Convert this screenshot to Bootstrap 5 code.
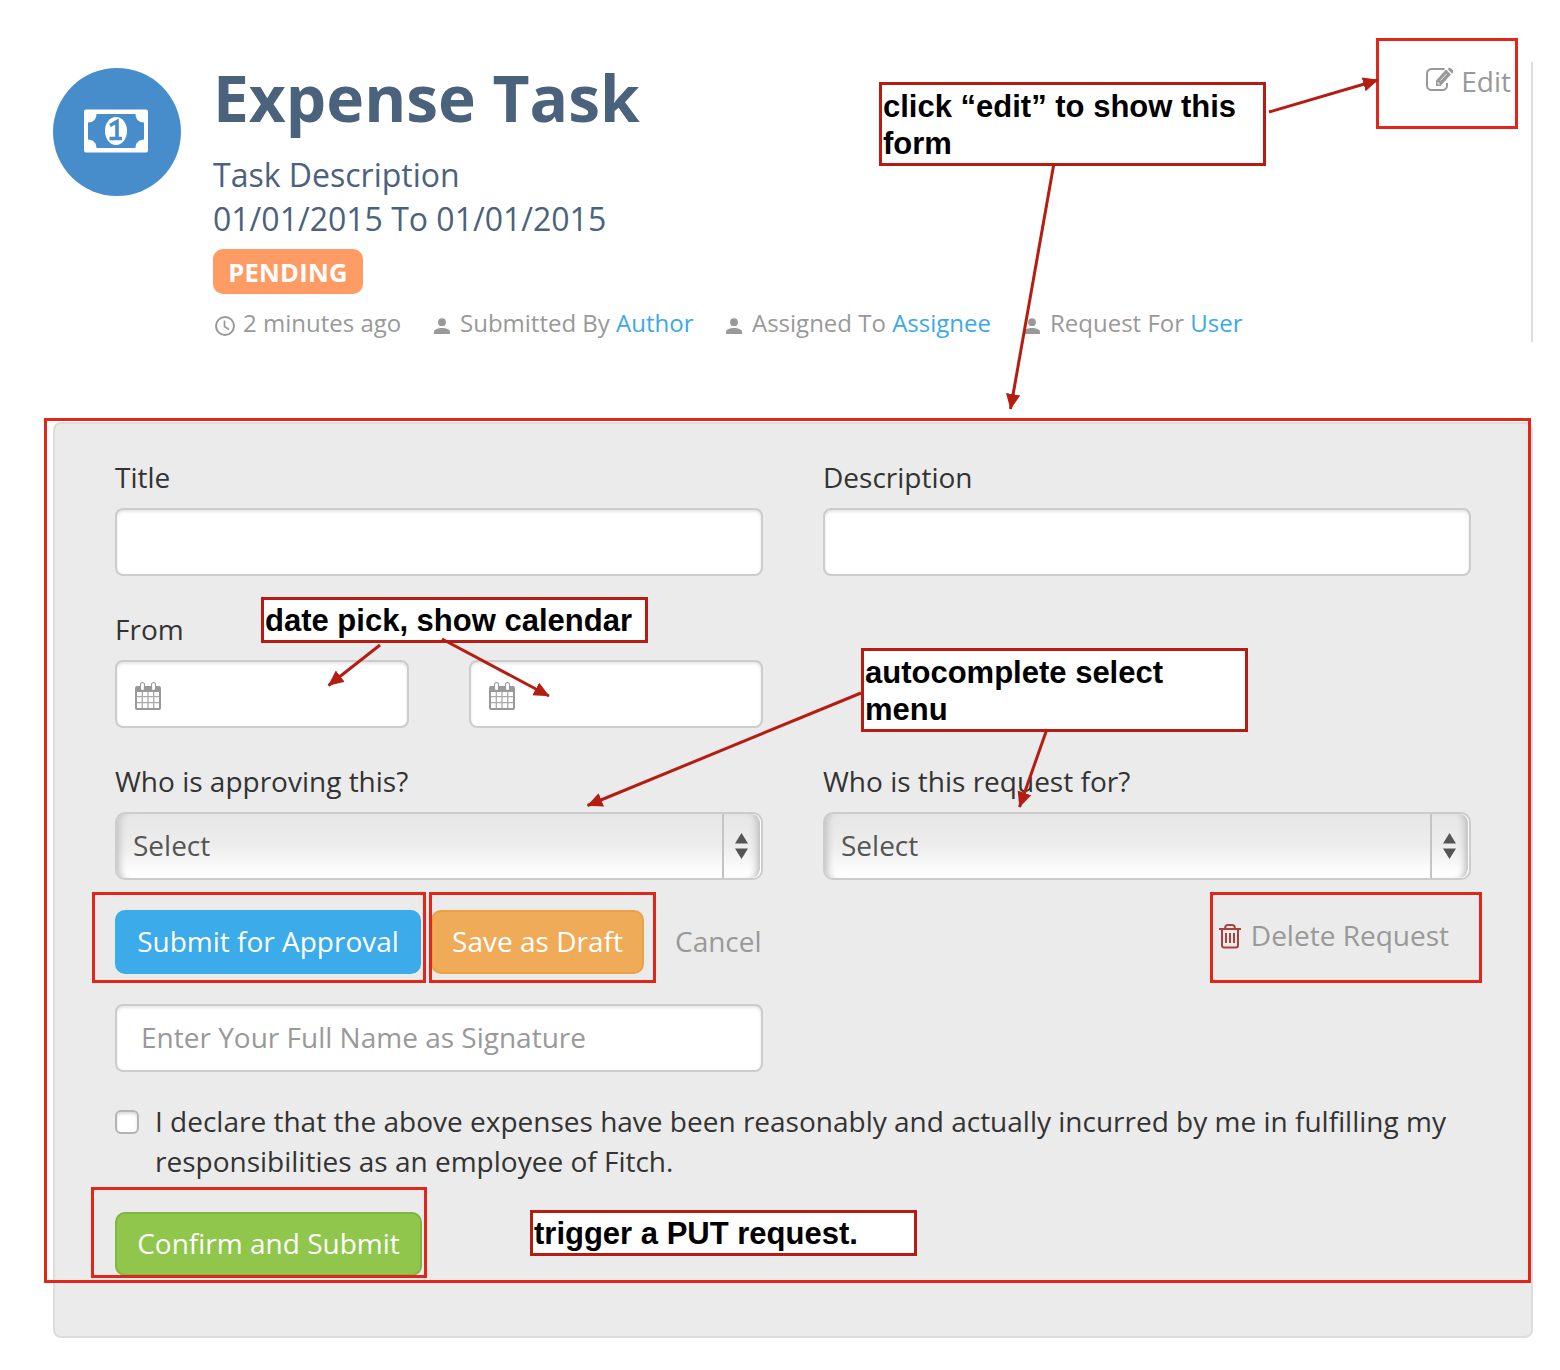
<!DOCTYPE html>
<html lang="en">
<head>
<meta charset="utf-8">
<title>Expense Task</title>
<link href="https://cdn.jsdelivr.net/npm/bootstrap@5.3.0/dist/css/bootstrap.min.css" rel="stylesheet">
<style>
body{font-family:"Open Sans","Noto Sans",sans-serif;font-size:28px;line-height:40px;color:#333;background:#fff}
.sheet{width:1560px;height:1370px;padding:62px 27px 0 53px;overflow:hidden}
.task-head{height:280px;border-right:2px solid #ddd}
.avatar{width:128px;height:128px;margin:6px 32px 0 0;padding:0 2px 2px 0;background:#488dcb}
.task-title{font-size:64px;line-height:70px;margin:1px 0 20px;color:#4b627d}
.task-text{font-size:32px;line-height:44px;color:#4b627d}
.status{width:150px;height:45px;margin-top:8px;border-radius:10px;background:#ff9b64;font-size:25.6px;letter-spacing:.25px;padding-top:2px}
.meta{font-size:24px;line-height:34px;margin-top:12px;color:#999}
.meta a,.meta .who{white-space:nowrap}
.meta a{color:#3ba9e8}
.meta svg{margin-right:8px}
.meta .clock{vertical-align:-4px}
.m1{width:219px}.m2{width:292px}.m3{width:298px}
.edit-link{color:#999;margin:-1px 20px 0 auto}
.panel{margin-top:80px;height:916px;border:2px solid #ddd;border-radius:8px;background:#ebebeb;padding:34px 60px 60px}
.cols{display:grid;grid-template-columns:1fr 1fr;column-gap:60px}
.field{margin-bottom:34px}
.field label{display:block;line-height:38px;margin-bottom:12px}
.form-control.box{height:68px;border:2px solid #ccc;border-radius:8px;font-size:28px;padding:0 24px 2px;box-shadow:inset 0 2px 3px rgba(0,0,0,.1)}
.form-control.box::placeholder{color:#999;opacity:1}
.form-control.date{padding:3px 18px 0}
.picker{height:68px;border:2px solid #ccc;border-radius:10px;background:linear-gradient(#e6e6e6,#ededed 50%,#fff 94%);padding-left:16px;color:#555;box-shadow:inset 9px 0 7px -6px #c4c4c4}
.picker .chosen{padding-bottom:2px}
.picker .knob{width:39px;padding-right:2px;border-left:2px solid #c4c4c4;border-right:1px solid #fff;border-radius:0 9px 9px 0;box-shadow:inset -8px 0 7px -5px #bbb}
.actions{margin-top:-4px;height:64px}
.btn.act{height:64px;border-width:2px;border-radius:10px;font-size:28px;line-height:40px;padding:0 0 2px;color:#fff}
.b-submit{width:306px;background:#3babe9;border-color:#3babe9;margin-right:10px}
.b-draft{width:213px;background:#efab57;border-color:#eda146;margin-right:31px}
.b-confirm{width:307px;background:#8fc64b;border-color:#7fb541}
.quiet{color:#999;padding-bottom:2px}
.delete{padding:0 22px 14px 0}
.bin{margin:2px 9px 0 0}
.sign{margin-top:30px}
.declare{margin:29px 0 31px}
.tick{width:24px;height:24px;flex:none;margin:9px 16px 0 0;border:2px solid #b4b4b4;border-radius:6px;background:#fff;box-shadow:inset 0 2px 3px rgba(0,0,0,.15)}
.frame{border:3px solid #e3261a}
.note{width:387px;border:3px solid #b51d12;background:#fff;color:#000;font:bold 31px/37px "Liberation Sans",Arial,sans-serif;padding:3px 1px 0}
.n1{left:879px;top:82px;height:84px}
.n2{left:261px;top:597px;height:46px;padding-top:2px}
.n3{left:861px;top:648px;height:84px}
.n4{left:530px;top:1210px;height:46px;padding-top:2px}
.f1{left:1376px;top:38px;width:142px;height:91px}
.f2{left:44px;top:418px;width:1487px;height:865px}
.f3{left:92px;top:892px;width:334px;height:91px}
.f4{left:429px;top:892px;width:227px;height:91px}
.f5{left:1210px;top:892px;width:272px;height:91px}
.f6{left:91px;top:1187px;width:336px;height:91px}
.arrows{left:0;top:0}
</style>
<script src="https://cdn.jsdelivr.net/npm/bootstrap@5.3.0/dist/js/bootstrap.bundle.min.js"></script>
</head>
<body>
<svg width="0" height="0" class="position-absolute">
<symbol id="person" viewBox="0 0 18 16"><circle cx="9" cy="4.2" r="3.900"/><path d="M1 16v-2c0-3 4.500-4 8-4s8 1 8 4v2z"/></symbol>
<symbol id="calendar" viewBox="0 0 26 28"><path fill="#999" d="M2 4h3V2.500a2.500 2.500 0 0 1 5 0V4h6V2.500a2.500 2.500 0 0 1 5 0V4h3a2 2 0 0 1 2 2v20a2 2 0 0 1-2 2H2a2 2 0 0 1-2-2V6a2 2 0 0 1 2-2z"/><path fill="#fff" d="M6 2.500a1.500 1.500 0 0 1 3 0v4a1.500 1.500 0 0 1-3 0zM17 2.500a1.500 1.500 0 0 1 3 0v4a1.500 1.500 0 0 1-3 0zM2 10h22v16H2z"/><path stroke="#aaa" stroke-width="1.300" d="M2 14.700h22M2 20.700h22M7.300 10v16M13 10v16M18.700 10v16"/></symbol>
</svg>
<main class="sheet position-relative">
  <header class="task-head d-flex">
    <div class="avatar rounded-circle d-flex align-items-center justify-content-center flex-shrink-0">
      <svg width="66" height="44" viewBox="0 0 66 44"><path fill="#fff" fill-rule="evenodd" d="M3 .5h60a2 2 0 0 1 2 2v39a2 2 0 0 1-2 2H3a2 2 0 0 1-2-2v-39a2 2 0 0 1 2-2zM13.500 5c0 5-3.500 8.500-8.500 8.500v17c5 0 8.500 3.500 8.500 8.500h39c0-5 3.500-8.500 8.500-8.500v-17c-5 0-8.500-3.500-8.500-8.500z"/><ellipse cx="33" cy="22" rx="11" ry="14" fill="#fff"/><path d="M27 16.500l7-4v17M26.500 29.500H39" fill="none" stroke="#488dcb" stroke-width="3.600"/></svg>
    </div>
    <div>
      <h1 class="task-title fw-bold">Expense Task</h1>
      <div class="task-text">Task Description</div>
      <div class="task-text">01/01/2015 To 01/01/2015</div>
      <div class="status d-flex align-items-center justify-content-center fw-bold text-white">PENDING</div>
      <div class="meta d-flex">
        <div class="m1 who"><svg class="clock" width="22" height="22" viewBox="0 0 22 22" fill="none" stroke="#999" stroke-width="2"><circle cx="12" cy="12" r="9"/><path stroke-width="1.700" d="M11.500 6.500v6l4.500 3"/></svg>2 minutes ago</div>
        <div class="m2 who"><svg width="20" height="16" fill="#999"><use href="#person" width="18" height="16" x="1"/></svg>Submitted By <a class="text-decoration-none" href="#">Author</a></div>
        <div class="m3 who"><svg width="20" height="16" fill="#999"><use href="#person" width="18" height="16" x="1"/></svg>Assigned To <a class="text-decoration-none" href="#">Assignee</a></div>
        <div class="who"><svg width="20" height="16" fill="#999"><use href="#person" width="18" height="16" x="1"/></svg>Request For <a class="text-decoration-none" href="#">User</a></div>
      </div>
    </div>
    <a class="edit-link d-flex align-items-start text-decoration-none flex-shrink-0" href="#"><svg class="me-2 mt-1" width="28" height="28" viewBox="-1 -2 28 28"><path fill="none" stroke="#999" stroke-width="2" d="M18.500 2H5.500A4.500 4.500 0 0 0 1 6.500v12A4.500 4.500 0 0 0 5.500 23h11a4.500 4.500 0 0 0 4.500-4.500V16"/><path fill="#999" d="M10 19v-5.500L20 2.500l5 5L14.500 19zM21.500 2l1-.8a2 2 0 0 1 2.600.2l1.700 1.700a2 2 0 0 1 .2 2.600l-.8 1z"/><path stroke="#fff" stroke-width=".8" fill="none" d="M14.500 13.500l6-6.500M12 15v2h2"/></svg>Edit</a>
  </header>

  <form class="panel">
    <div class="cols">
      <div class="field"><label for="title">Title</label><input id="title" class="form-control box"></div>
      <div class="field"><label for="desc">Description</label><input id="desc" class="form-control box"></div>
    </div>
    <div class="cols">
      <div class="field">
        <label>From</label>
        <div class="cols">
          <div class="form-control box date d-flex align-items-center"><svg width="26" height="28"><use href="#calendar"/></svg></div>
          <div class="form-control box date d-flex align-items-center"><svg width="26" height="28"><use href="#calendar"/></svg></div>
        </div>
      </div>
    </div>
    <div class="cols">
      <div class="field"><label>Who is approving this?</label>
        <div class="picker d-flex"><span class="chosen align-self-center me-auto">Select</span><span class="knob d-flex align-items-center justify-content-center"><svg width="13" height="26"><path fill="#555" d="M0 10.500L6.500 0 13 10.500zM0 15.500h13L6.500 26z"/></svg></span></div></div>
      <div class="field"><label>Who is this request for?</label>
        <div class="picker d-flex"><span class="chosen align-self-center me-auto">Select</span><span class="knob d-flex align-items-center justify-content-center"><svg width="13" height="26"><path fill="#555" d="M0 10.500L6.500 0 13 10.500zM0 15.500h13L6.500 26z"/></svg></span></div></div>
    </div>
    <div class="actions d-flex align-items-center">
      <button type="button" class="btn act b-submit">Submit for Approval</button>
      <button type="button" class="btn act b-draft">Save as Draft</button>
      <span class="quiet">Cancel</span>
      <span class="quiet delete d-flex align-items-center ms-auto"><svg class="bin" width="24" height="26" viewBox="0 0 24 26" fill="none" stroke="#ab403d" stroke-width="2"><path d="M1 6h22M4 6v16.500a2 2 0 0 0 2 2h12a2 2 0 0 0 2-2V6M7 6c0-3 1-4 3-4h4c2 0 3 1 3 4M8 10v10M12 10v10M16 10v10"/></svg>Delete Request</span>
    </div>
    <div class="cols sign"><input class="form-control box" placeholder="Enter Your Full Name as Signature"></div>
    <div class="declare d-flex"><span class="tick"></span><div>I declare that the above expenses have been reasonably and actually incurred by me in fulfilling my responsibilities as an employee of Fitch.</div></div>
    <button type="button" class="btn act b-confirm d-block">Confirm and Submit</button>
  </form>

  <div class="frame f1 position-absolute"></div>
  <div class="frame f2 position-absolute"></div>
  <div class="frame f3 position-absolute"></div>
  <div class="frame f4 position-absolute"></div>
  <div class="frame f5 position-absolute"></div>
  <div class="frame f6 position-absolute"></div>
  <div class="note n1 position-absolute">click “edit” to show this form</div>
  <div class="note n2 position-absolute">date pick, show calendar</div>
  <div class="note n3 position-absolute">autocomplete select menu</div>
  <div class="note n4 position-absolute">trigger a PUT request.</div>
  <svg class="arrows position-absolute pe-none" width="1560" height="1370">
    <defs><marker id="tip" markerUnits="userSpaceOnUse" markerWidth="16" markerHeight="16" refX="15" refY="7.500" orient="auto"><path fill="#b51d12" d="M0 .3l15.500 7.200L0 14.700z"/></marker></defs>
    <g stroke="#b51d12" stroke-width="3">
      <path marker-end="url(#tip)" d="M1269 112L1378 80"/>
      <path marker-end="url(#tip)" d="M1054 163L1010.500 409"/>
      <path marker-end="url(#tip)" d="M380 645L328.500 685.500"/>
      <path marker-end="url(#tip)" d="M442 639L549 696"/>
      <path marker-end="url(#tip)" d="M861 693L587.500 805.500"/>
      <path marker-end="url(#tip)" d="M1047 729L1019.500 807"/>
    </g>
  </svg>
</main>
</body>
</html>
